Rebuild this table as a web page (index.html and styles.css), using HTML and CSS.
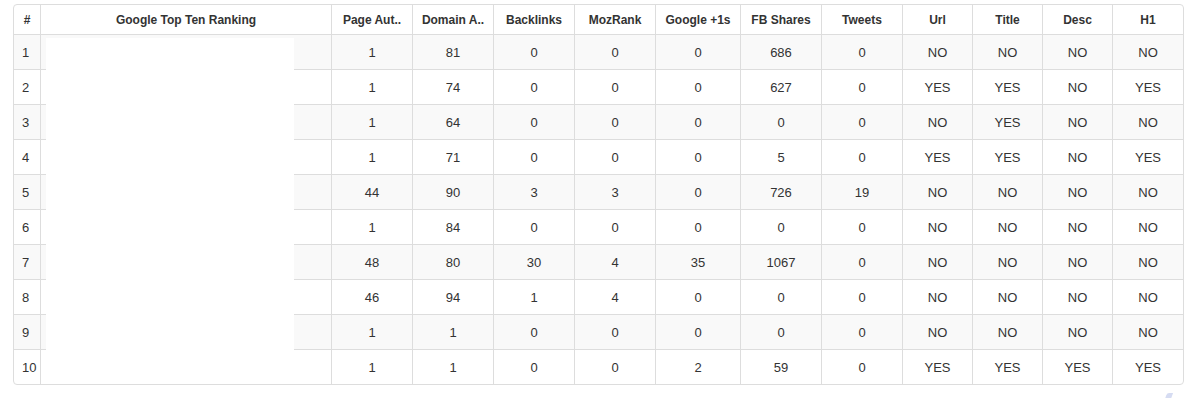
FILE: index.html
```html
<!DOCTYPE html>
<html>
<head>
<meta charset="utf-8">
<link rel="stylesheet" href="styles.css">
</head>
<body>
<div class="wrap">
<table class="grid">
<colgroup>
<col class="c-n"><col class="c-g"><col class="c-81"><col class="c-81"><col class="c-81"><col class="c-81"><col class="c-85"><col class="c-81"><col class="c-81"><col class="c-70"><col class="c-70"><col class="c-70"><col class="c-70">
</colgroup>
<thead>
<tr><th>#</th><th>Google Top Ten Ranking</th><th>Page Aut..</th><th>Domain A..</th><th>Backlinks</th><th>MozRank</th><th>Google +1s</th><th>FB Shares</th><th>Tweets</th><th>Url</th><th>Title</th><th>Desc</th><th>H1</th></tr>
</thead>
<tbody>
<tr><td>1</td><td></td><td>1</td><td>81</td><td>0</td><td>0</td><td>0</td><td>686</td><td>0</td><td>NO</td><td>NO</td><td>NO</td><td>NO</td></tr>
<tr><td>2</td><td></td><td>1</td><td>74</td><td>0</td><td>0</td><td>0</td><td>627</td><td>0</td><td>YES</td><td>YES</td><td>NO</td><td>YES</td></tr>
<tr><td>3</td><td></td><td>1</td><td>64</td><td>0</td><td>0</td><td>0</td><td>0</td><td>0</td><td>NO</td><td>YES</td><td>NO</td><td>NO</td></tr>
<tr><td>4</td><td></td><td>1</td><td>71</td><td>0</td><td>0</td><td>0</td><td>5</td><td>0</td><td>YES</td><td>YES</td><td>NO</td><td>YES</td></tr>
<tr><td>5</td><td></td><td>44</td><td>90</td><td>3</td><td>3</td><td>0</td><td>726</td><td>19</td><td>NO</td><td>NO</td><td>NO</td><td>NO</td></tr>
<tr><td>6</td><td></td><td>1</td><td>84</td><td>0</td><td>0</td><td>0</td><td>0</td><td>0</td><td>NO</td><td>NO</td><td>NO</td><td>NO</td></tr>
<tr><td>7</td><td></td><td>48</td><td>80</td><td>30</td><td>4</td><td>35</td><td>1067</td><td>0</td><td>NO</td><td>NO</td><td>NO</td><td>NO</td></tr>
<tr><td>8</td><td></td><td>46</td><td>94</td><td>1</td><td>4</td><td>0</td><td>0</td><td>0</td><td>NO</td><td>NO</td><td>NO</td><td>NO</td></tr>
<tr><td>9</td><td></td><td>1</td><td>1</td><td>0</td><td>0</td><td>0</td><td>0</td><td>0</td><td>NO</td><td>NO</td><td>NO</td><td>NO</td></tr>
<tr><td>10</td><td></td><td>1</td><td>1</td><td>0</td><td>0</td><td>2</td><td>59</td><td>0</td><td>YES</td><td>YES</td><td>YES</td><td>YES</td></tr>
</tbody>
</table>
<div class="mask"></div>
</div>
<div class="corner-mark"></div>
</body>
</html>
```

FILE: styles.css
```css
html, body {
  margin: 0;
  padding: 0;
  background: #fff;
}
body {
  padding: 4px 0 0 13px;
  font-family: "Liberation Sans", Arial, sans-serif;
  color: #333;
  position: relative;
  height: 394px;
  overflow: hidden;
}
.wrap {
  position: relative;
  width: 1169px;
  border: 1px solid #ddd;
  border-radius: 4px;
  overflow: hidden;
}
.grid {
  border-collapse: separate;
  border-spacing: 0;
  table-layout: fixed;
  width: 1169px;
}
.c-n { width: 27px; }
.c-g { width: 291px; }
.c-81 { width: 81px; }
.c-85 { width: 85px; }
.c-70 { width: 70px; }
.grid th, .grid td {
  box-sizing: border-box;
  border-right: 1px solid #ddd;
  border-bottom: 1px solid #ddd;
  text-align: center;
  vertical-align: middle;
  padding: 0;
  white-space: nowrap;
  overflow: hidden;
}
.grid th:last-child, .grid td:last-child {
  border-right: 0;
}
.grid tbody tr:last-child td {
  border-bottom: 0;
  height: 34px;
}
.grid th {
  height: 30px;
  font-size: 12px;
  font-weight: bold;
}
.grid td {
  height: 35px;
  font-size: 13px;
}
.grid td:first-child {
  text-align: left;
  padding-left: 8px;
}
.grid tbody tr:nth-child(odd) td {
  background: #f9f9f9;
}
.mask {
  position: absolute;
  left: 32px;
  top: 33px;
  width: 248px;
  height: 312px;
  background: #fff;
}
.corner-mark {
  position: absolute;
  left: 1166px;
  top: 393px;
  width: 6px;
  height: 6px;
  background: #d6dcf2;
  border-radius: 2px 0 0 0;
  transform: skewX(-20deg);
}
```
